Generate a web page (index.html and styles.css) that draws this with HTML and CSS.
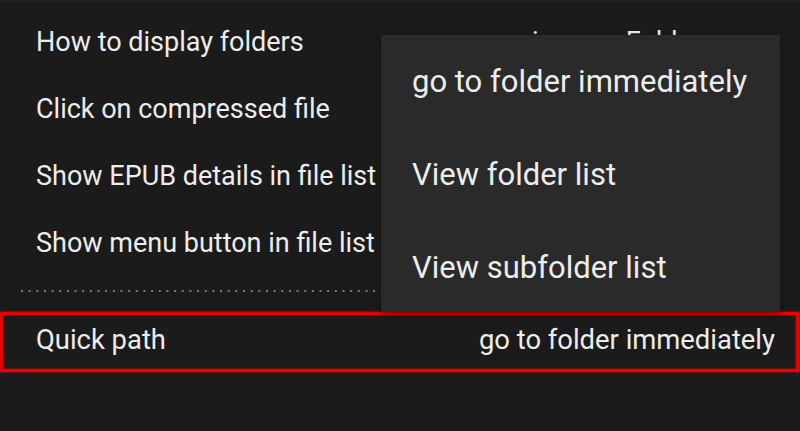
FILE: index.html
```html
<!DOCTYPE html>
<html>
<head>
<meta charset="utf-8">
<link rel="stylesheet" href="styles.css">
</head>
<body>
<div class="screen">
  <div class="list">
    <div class="row"><span class="label">How to display folders</span><span class="value value-hidden">icons + Folders</span></div>
    <div class="row"><span class="label">Click on compressed file</span></div>
    <div class="row"><span class="label">Show EPUB details in file list</span></div>
    <div class="row"><span class="label">Show menu button in file list</span></div>
    <div class="sep"></div>
    <div class="row row-selected"><span class="label">Quick path</span><span class="value">go to folder immediately</span></div>
  </div>
  <div class="menu">
    <div class="menu-item">go to folder immediately</div>
    <div class="menu-item">View folder list</div>
    <div class="menu-item">View subfolder list</div>
  </div>
</div>
</body>
</html>
```
FILE: styles.css
```css
html, body {
  margin: 0;
  padding: 0;
}
body {
  width: 800px;
  height: 431px;
  overflow: hidden;
  background: #1b1b1b;
  font-family: Roboto, "Noto Sans", sans-serif;
  color: #ededed;
}
.screen {
  position: relative;
  width: 800px;
  height: 431px;
  border-top: 2px solid #222;
  box-sizing: border-box;
}
.list {
  padding-top: 6px;
}
.row {
  display: flex;
  align-items: center;
  justify-content: space-between;
  height: 67px;
  padding: 0 26px 0 36px;
  font-size: 27px;
}
.value-hidden {
  margin-right: 59px;
}
.sep {
  height: 36px;
  margin: 0 20px 0 21px;
  background-image: linear-gradient(to right, #7a7a7a 0 2px, transparent 2px);
  background-size: 7.67px 2px;
  background-repeat: repeat-x;
  background-position: 0 14px;
}
.row-selected {
  width: 799px;
  box-sizing: border-box;
  height: 60px;
  padding: 0 21px 4px 33px;
  border: 3px solid #e60000;
  box-shadow: 0 0 2px #ff0000, inset 0 0 2px #ff0000;
  font-size: 27.4px;
}
.menu {
  position: absolute;
  left: 381px;
  top: 33px;
  width: 399px;
  height: 277px;
  background: #2a2a2a;
  box-shadow: 0 2px 6px rgba(0,0,0,0.45);
}
.menu-item {
  height: 93px;
  display: flex;
  align-items: center;
  padding-left: 31px;
  font-size: 31px;
}
```
